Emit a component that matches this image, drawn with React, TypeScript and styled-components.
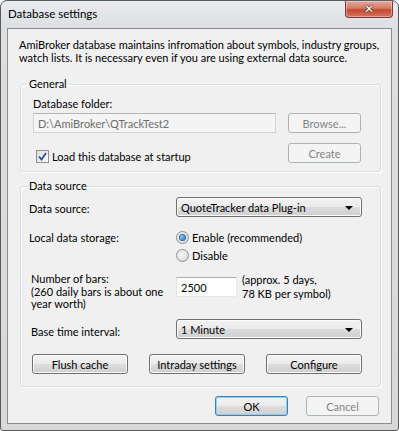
import React, { FC, useState } from "react";
import styled, { createGlobalStyle, css } from "styled-components";

const GlobalStyle = createGlobalStyle`
  html, body {
    margin: 0;
    padding: 0;
    background: #ffffff;
  }
  body {
    font-family: Lato, "Noto Sans", sans-serif;
    font-size: 11px;
    line-height: 13px;
    color: #000;
  }
`;

const Window = styled.div`
  width: 399px;
  height: 431px;
  box-sizing: border-box;
  border: 1px solid #5b5b5b;
  border-radius: 7px 7px 3px 3px;
  background: linear-gradient(#e9ebee, #dcdfe2 28px, #d8d8d8);
  display: flex;
  flex-direction: column;
  overflow: hidden;
`;

const TitleBar = styled.div`
  height: 27px;
  flex: none;
  display: flex;
  align-items: flex-start;
  justify-content: space-between;
  padding-left: 7px;
`;

const Title = styled.div`
  font-size: 11.5px;
  line-height: 14px;
  margin-top: 5.5px;
`;

const CloseButton = styled.div`
  width: 48px;
  height: 17px;
  margin-right: 5px;
  box-sizing: border-box;
  border: 1px solid #7c3a33;
  border-top: none;
  border-radius: 0 0 4px 4px;
  background: linear-gradient(#e3a89b, #d57b66 45%, #c24a32 55%, #d47660);
  box-shadow: inset 0 0 0 1px rgba(255, 255, 255, 0.35);
  display: flex;
  align-items: center;
  justify-content: center;
  color: #fff;
  font-size: 12px;
  font-weight: bold;
  font-family: "DejaVu Sans", sans-serif;
  text-shadow: 0 0 1px #3a1a14, 0 0 1px #3a1a14, 0 0 1px #3a1a14;
`;

const Client = styled.div`
  flex: 1;
  margin: 0 6px 6px 6px;
  border: 1px solid #8d8d8d;
  background: #f0f0f0;
  display: flex;
  flex-direction: column;
  padding: 9px 10px 0 12px;
`;

const Intro = styled.p`
  margin: 0 0 0 -1px;
  white-space: nowrap;
`;

const Group = styled.fieldset<{ $top: number }>`
  margin: ${(p) => p.$top}px 0 0 0;
  padding: 0;
  border: 1px solid #d5dfe5;
  border-radius: 3px;
  box-shadow: inset 1px 1px 0 #fff, 1px 1px 0 #fff;
  min-width: 0;
`;

const Legend = styled.legend`
  margin-left: 6px;
  padding: 0 2px;
  line-height: 14px;
`;

const GeneralBody = styled.div`
  padding: 6px 19px 8px 12px;
  display: flex;
  flex-direction: column;
`;

const FieldLabel = styled.div``;

const Row = styled.div<{ $top?: number }>`
  display: flex;
  justify-content: space-between;
  align-items: flex-start;
  margin-top: ${(p) => p.$top ?? 0}px;
`;

const TextBox = styled.div<{ $width: number; $disabled?: boolean }>`
  width: ${(p) => p.$width}px;
  height: 20px;
  box-sizing: border-box;
  border: 1px solid;
  border-color: ${(p) =>
    p.$disabled ? "#b5b5b5 #d3d3d3 #d3d3d3 #d3d3d3" : "#abadb3 #e3e9ef #e3e9ef #e2e3ea"};
  background: ${(p) => (p.$disabled ? "#f4f4f4" : "#fff")};
  color: ${(p) => (p.$disabled ? "#6d6d6d" : "#000")};
  padding: 0 4px;
  display: flex;
  align-items: center;
`;

const BarsBox = styled(TextBox)`
  margin-top: 4px;
`;

const Button = styled.div<{ $width: number; $disabled?: boolean; $default?: boolean }>`
  width: ${(p) => p.$width}px;
  height: 20px;
  box-sizing: border-box;
  border: 1px solid #707070;
  border-radius: 3px;
  background: linear-gradient(#f2f2f2, #ebebeb 50%, #dddddd 50%, #cfcfcf);
  box-shadow: inset 0 0 0 1px #fcfcfc;
  display: flex;
  align-items: center;
  justify-content: center;
  white-space: nowrap;
  ${(p) =>
    p.$disabled &&
    css`
      border-color: #adb2b5;
      background: #f4f4f4;
      box-shadow: none;
      color: #838383;
    `}
  ${(p) =>
    p.$default &&
    css`
      border-color: #3c7fb1;
      box-shadow: inset 0 0 0 1px #8fd0f2;
    `}
`;

const Select = styled(Button)`
  justify-content: space-between;
  padding: 0 8px 0 4px;
`;

const Arrow = styled.span`
  width: 0;
  height: 0;
  border-left: 4px solid transparent;
  border-right: 4px solid transparent;
  border-top: 4px solid #000;
  margin-top: 1px;
`;

const CheckRow = styled.label`
  display: flex;
  align-items: center;
  gap: 3px;
  margin-top: 7px;
  margin-left: 3px;
`;

const CheckBox = styled.span`
  width: 13px;
  height: 13px;
  box-sizing: border-box;
  border: 1px solid #8f8f8f;
  background: linear-gradient(135deg, #dcdcdc, #fbfbfb);
  display: flex;
  align-items: center;
  justify-content: center;
`;

const DataBody = styled.div`
  padding: 0 19px 12px 8px;
  display: grid;
  grid-template-columns: 147px 1fr;
  align-items: start;
`;

const GridLabel = styled.div<{ $top: number; $left?: number }>`
  margin-top: ${(p) => p.$top}px;
  margin-left: ${(p) => p.$left ?? 0}px;
  white-space: nowrap;
`;

const MultiLabel = styled(GridLabel)`
  line-height: 12.5px;
`;

const GridCell = styled.div<{ $top: number }>`
  margin-top: ${(p) => p.$top}px;
`;

const RadioGroup = styled.div`
  display: flex;
  flex-direction: column;
  gap: 5px;
`;

const RadioRow = styled.label`
  display: flex;
  align-items: center;
  gap: 3px;
`;

const Radio = styled.span<{ $checked?: boolean }>`
  width: 13px;
  height: 13px;
  box-sizing: border-box;
  border-radius: 50%;
  border: 1px solid #8f8f8f;
  background: radial-gradient(circle at 40% 40%, #f7f7f7, #d4d4d4);
  display: flex;
  align-items: center;
  justify-content: center;
  &::after {
    content: "";
    display: ${(p) => (p.$checked ? "block" : "none")};
    width: 5px;
    height: 5px;
    border-radius: 50%;
    background: radial-gradient(circle at 35% 35%, #8ad3ff, #0d5ba3);
    box-shadow: 0 0 0 1px #2a6ca8;
  }
`;

const BarsRow = styled.div`
  display: flex;
  gap: 5px;
  align-items: flex-start;
`;

const Note = styled.div`
  line-height: 14px;
  white-space: nowrap;
`;

const ButtonRow = styled.div`
  grid-column: 1 / span 2;
  display: flex;
  justify-content: space-between;
  margin-top: 15px;
  margin-left: 3px;
`;

const Footer = styled.div`
  display: flex;
  justify-content: flex-end;
  gap: 18px;
  margin-top: 9px;
  padding-right: 2px;
`;

const Check: FC = () => (
  <svg width="9" height="9" viewBox="0 0 9 9">
    <path d="M1 4.5 L3.5 7.5 L8 1" fill="none" stroke="#2b4f9c" strokeWidth="1.8" />
  </svg>
);

const App: FC = () => {
  const [storage, setStorage] = useState("enable");
  return (
    <>
      <GlobalStyle />
      <Window>
        <TitleBar>
          <Title>Database settings</Title>
          <CloseButton>✕</CloseButton>
        </TitleBar>
        <Client>
          <Intro>
            AmiBroker database maintains infromation about symbols, industry groups,
            <br />
            watch lists. It is necessary even if you are using external data source.
          </Intro>
          <Group $top={13}>
            <Legend>General</Legend>
            <GeneralBody>
              <FieldLabel>Database folder:</FieldLabel>
              <Row $top={3}>
                <TextBox $width={243} $disabled>
                  D:\AmiBroker\QTrackTest2
                </TextBox>
                <Button $width={73} $disabled>
                  Browse...
                </Button>
              </Row>
              <Row $top={10}>
                <CheckRow>
                  <CheckBox>
                    <Check />
                  </CheckBox>
                  Load this database at startup
                </CheckRow>
                <Button $width={73} $disabled>
                  Create
                </Button>
              </Row>
            </GeneralBody>
          </Group>
          <Group $top={7}>
            <Legend>Data source</Legend>
            <DataBody>
              <GridLabel $top={9}>Data source:</GridLabel>
              <GridCell $top={4}>
                <Select $width={186}>
                  QuoteTracker data Plug-in
                  <Arrow />
                </Select>
              </GridCell>
              <GridLabel $top={14}>Local data storage:</GridLabel>
              <GridCell $top={14}>
                <RadioGroup>
                  <RadioRow onClick={() => setStorage("enable")}>
                    <Radio $checked={storage === "enable"} />
                    Enable (recommended)
                  </RadioRow>
                  <RadioRow onClick={() => setStorage("disable")}>
                    <Radio $checked={storage === "disable"} />
                    Disable
                  </RadioRow>
                </RadioGroup>
              </GridCell>
              <MultiLabel $top={11} $left={2}>
                Number of bars:
                <br />
                (260 daily bars is about one
                <br />
                year worth)
              </MultiLabel>
              <GridCell $top={11}>
                <BarsRow>
                  <BarsBox $width={61}>2500</BarsBox>
                  <Note>
                    (approx. 5 days,
                    <br />
                    78 KB per symbol)
                  </Note>
                </BarsRow>
              </GridCell>
              <GridLabel $top={14} $left={2}>
                Base time interval:
              </GridLabel>
              <GridCell $top={8.5}>
                <Select $width={186}>
                  1 Minute
                  <Arrow />
                </Select>
              </GridCell>
              <ButtonRow>
                <Button $width={96}>Flush cache</Button>
                <Button $width={96}>Intraday settings</Button>
                <Button $width={96}>Configure</Button>
              </ButtonRow>
            </DataBody>
          </Group>
          <Footer>
            <Button $width={73} $default>
              OK
            </Button>
            <Button $width={73} $disabled>
              Cancel
            </Button>
          </Footer>
        </Client>
      </Window>
    </>
  );
};

export default App;
